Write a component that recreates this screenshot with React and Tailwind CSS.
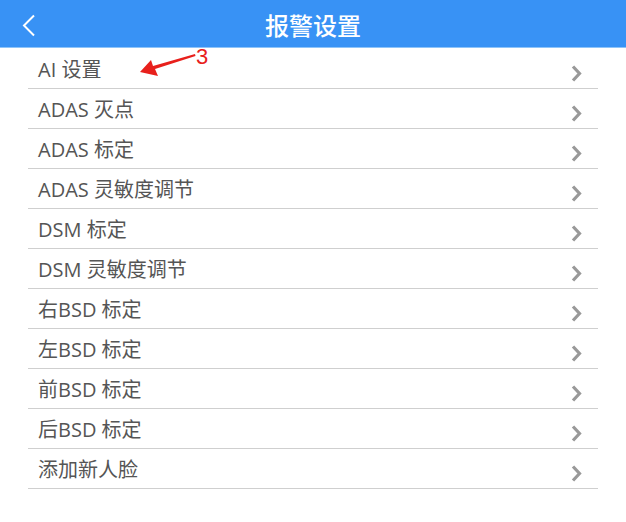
import React from 'react';

const items = [
  'AI 设置',
  'ADAS 灭点',
  'ADAS 标定',
  'ADAS 灵敏度调节',
  'DSM 标定',
  'DSM 灵敏度调节',
  '右BSD 标定',
  '左BSD 标定',
  '前BSD 标定',
  '后BSD 标定',
  '添加新人脸',
];

const font = { fontFamily: '"Open Sans", "Noto Sans CJK SC", sans-serif' };

const App = () => {
  return (
    <div className="w-[626px] h-[522px] bg-white relative overflow-hidden" style={font}>
      {/* Header */}
      <div className="h-[48px] bg-[#3892f5] border-b border-[#8ec4f9] flex items-center justify-center relative">
        <svg className="absolute left-[22px] top-[14px]" width="14" height="23" viewBox="0 0 14 23">
          <path d="M12 1.5 L2 11.5 L12 21.5" fill="none" stroke="#fff" strokeWidth="2" />
        </svg>
        <span className="text-white text-[24px] font-medium leading-none mt-[4px]">报警设置</span>
      </div>

      {/* List */}
      <div className="mx-[28px] mt-px">
        {items.map((label) => (
          <div key={label} className="h-[40px] border-b border-[#cfcfcf] flex items-center justify-between pl-[10px] pr-[16px]">
            <span className="text-[20px] text-[#555] leading-none mt-[3px]">{label}</span>
            <svg className="mt-[10px]" width="11" height="17" viewBox="0 0 11 17">
              <path d="M2 1.5 L8.5 8.5 L2 15.5" fill="none" stroke="#999" strokeWidth="3.2" />
            </svg>
          </div>
        ))}
      </div>

      {/* Annotation */}
      <svg className="absolute left-[136px] top-[42px]" width="80" height="38" viewBox="0 0 80 38">
        <path d="M4 30 L15 18 L17 24 L59 12 L59.5 14 L19 27 L22 34 Z" fill="#e8201c" />
        <text x="60" y="22" fill="#e8201c" fontSize="22" fontFamily="Liberation Sans, sans-serif">3</text>
      </svg>
    </div>
  );
};

export default App;
